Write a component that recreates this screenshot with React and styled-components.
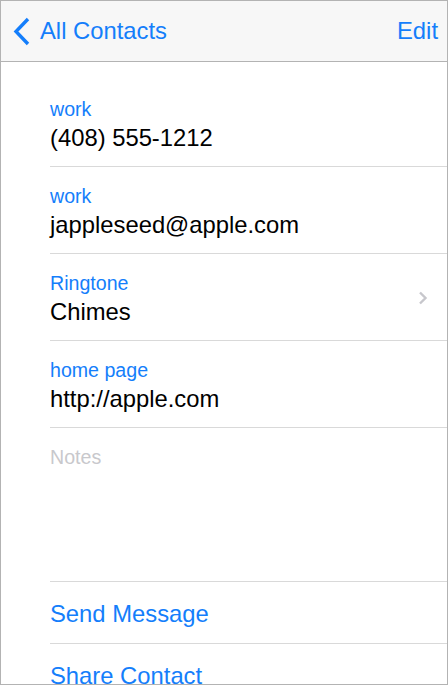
import styled, { createGlobalStyle } from "styled-components";

const Global = createGlobalStyle`
    html, body {
        margin: 0;
        padding: 0;
        background: #ffffff;
    }
    * {
        box-sizing: border-box;
    }
`;

const Frame = styled.div`
    width: 448px;
    height: 685px;
    border: 1px solid #b3b3b3;
    background-color: #ffffff;
    display: flex;
    flex-direction: column;
    overflow: hidden;
    font-family: "Liberation Sans", Arial, sans-serif;
`;

const NavBar = styled.div`
    height: 61px;
    flex-shrink: 0;
    background-color: #f7f7f7;
    border-bottom: 1px solid #b3b3b3;
    display: flex;
    align-items: center;
    justify-content: space-between;
    padding: 0 9px 0 11px;
`;

const NavButton = styled.div`
    display: flex;
    align-items: center;
    gap: 9px;
    color: #147efb;
    font-size: 23.8px;
    cursor: pointer;
`;

const List = styled.div`
    display: flex;
    flex-direction: column;
    padding-top: 18px;
`;

const Row = styled.div`
    margin-left: 49px;
    height: ${(p) => p.h || 87}px;
    flex-shrink: 0;
    border-bottom: 1px solid #d9d9d9;
    display: flex;
    align-items: ${(p) => (p.center ? "center" : "flex-start")};
    justify-content: space-between;
    padding-right: 19px;
`;

const Field = styled.div`
    display: flex;
    flex-direction: column;
    padding-top: ${(p) => p.top || 17}px;
`;

const Label = styled.div`
    font-size: 19.6px;
    line-height: 24px;
    color: ${(p) => (p.muted ? "#c8c8cc" : "#147efb")};
`;

const Value = styled.div`
    font-size: 23.8px;
    line-height: 30px;
    margin-top: 2px;
    color: #000000;
`;

const Action = styled.div`
    font-size: 23.8px;
    color: #147efb;
    cursor: pointer;
    padding-top: 2px;
`;

const More = styled.svg`
    align-self: center;
    margin-top: 2px;
`;

const Chevron = () => (
    <More width="10" height="14" viewBox="0 0 10 14">
        <path d="M2 1.5 L7.5 7 L2 12.5" fill="none" stroke="#c7c7cc" strokeWidth="2.4" />
    </More>
);

const BackArrow = () => (
    <svg width="19" height="29" viewBox="0 0 19 29">
        <path d="M16 2 L4 14.5 L16 27" fill="none" stroke="#147efb" strokeWidth="3.4" />
    </svg>
);

const fields = [
    { label: "work", value: "(408) 555-1212" },
    { label: "work", value: "jappleseed@apple.com" },
    { label: "Ringtone", value: "Chimes", more: true },
    { label: "home page", value: "http://apple.com" },
];

const App = () => {
    return (
        <Frame>
            <Global />
            <NavBar>
                <NavButton>
                    <BackArrow />
                    All Contacts
                </NavButton>
                <NavButton>Edit</NavButton>
            </NavBar>
            <List>
                {fields.map((f, i) => (
                    <Row key={i}>
                        <Field>
                            <Label>{f.label}</Label>
                            <Value>{f.value}</Value>
                        </Field>
                        {f.more && <Chevron />}
                    </Row>
                ))}
                <Row h={154}>
                    <Field top={17}>
                        <Label muted>Notes</Label>
                    </Field>
                </Row>
                <Row h={62} center>
                    <Action>Send Message</Action>
                </Row>
                <Row h={62} center>
                    <Action>Share Contact</Action>
                </Row>
            </List>
        </Frame>
    );
};

export default App;
